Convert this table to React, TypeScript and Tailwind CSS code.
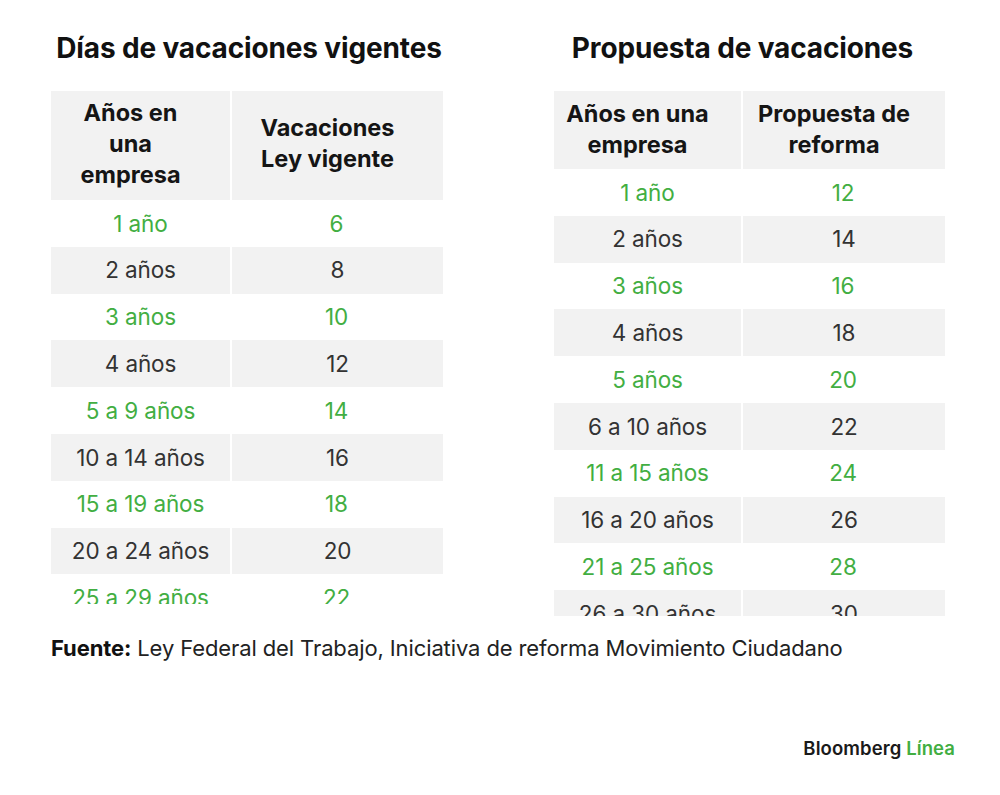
import React from "react"

type Row = { years: string; days: string }

const current: Row[] = [
  { years: "1 año", days: "6" },
  { years: "2 años", days: "8" },
  { years: "3 años", days: "10" },
  { years: "4 años", days: "12" },
  { years: "5 a 9 años", days: "14" },
  { years: "10 a 14 años", days: "16" },
  { years: "15 a 19 años", days: "18" },
  { years: "20 a 24 años", days: "20" },
  { years: "25 a 29 años", days: "22" },
]

const proposal: Row[] = [
  { years: "1 año", days: "12" },
  { years: "2 años", days: "14" },
  { years: "3 años", days: "16" },
  { years: "4 años", days: "18" },
  { years: "5 años", days: "20" },
  { years: "6 a 10 años", days: "22" },
  { years: "11 a 15 años", days: "24" },
  { years: "16 a 20 años", days: "26" },
  { years: "21 a 25 años", days: "28" },
  { years: "26 a 30 años", days: "30" },
]

const font = { fontFamily: "Inter, 'Liberation Sans', sans-serif" }

const DataRows = ({ rows, firstCol }: { rows: Row[]; firstCol: string }) => (
  <>
    {rows.map((r, i) => {
      const green = i % 2 === 0
      return (
        <div
          key={r.years}
          className={`flex h-[46.8px] shrink-0 text-[22.5px] tracking-[-0.005em] ${
            green ? "bg-white text-[#42ae42]" : "bg-[#f2f2f2] text-[#333333]"
          }`}
        >
          <div className={`${firstCol} flex items-center justify-center`}>{r.years}</div>
          <div className={`flex-1 flex items-center justify-center ${green ? "" : "border-l-2 border-white"}`}>
            {r.days}
          </div>
        </div>
      )
    })}
  </>
)

export default function App() {
  return (
    <div className="w-[1000px] h-[795px] bg-white text-[#111] relative" style={font}>
      <div className="flex pl-[51px] pt-[29px]">
        <div className="w-[392px] flex flex-col">
          <h1 className="text-[28px] font-bold tracking-[-0.005em] text-center h-[38px] leading-[38px] pl-[4px] whitespace-nowrap">
            Días de vacaciones vigentes
          </h1>
          <div className="mt-[24px] h-[513px] overflow-hidden flex flex-col">
            <div className="flex h-[109px] shrink-0 bg-[#f2f2f2] text-[23.5px] font-bold leading-[31px] text-[#151515]">
              <div className="w-[179px] flex items-center justify-center text-center pb-[4px] pr-[20px]">
                Años en
                <br />
                una
                <br />
                empresa
              </div>
              <div className="flex-1 border-l-2 border-white flex items-center justify-center text-center pb-[6px] pr-[20px]">
                Vacaciones
                <br />
                Ley vigente
              </div>
            </div>
            <DataRows rows={current} firstCol="w-[179px]" />
          </div>
        </div>

        <div className="w-[391px] ml-[111px] flex flex-col">
          <h1 className="text-[28px] font-bold tracking-[-0.005em] text-center h-[38px] leading-[38px] pr-[14px] whitespace-nowrap">
            Propuesta de vacaciones
          </h1>
          <div className="mt-[24px] h-[525px] overflow-hidden flex flex-col">
            <div className="flex h-[78px] shrink-0 bg-[#f2f2f2] text-[23.5px] font-bold leading-[31px] text-[#151515]">
              <div className="w-[187px] flex items-center justify-center text-center pb-[2px] pr-[20px] whitespace-nowrap">
                Años en una
                <br />
                empresa
              </div>
              <div className="flex-1 border-l-2 border-white flex items-center justify-center text-center pb-[2px] pr-[20px] whitespace-nowrap">
                Propuesta de
                <br />
                reforma
              </div>
            </div>
            <DataRows rows={proposal} firstCol="w-[187px]" />
          </div>
        </div>
      </div>

      <p className="pl-[51px] mt-[16px] text-[22px] tracking-[-0.005em] text-[#222] whitespace-nowrap">
        <span className="font-bold text-[#111]">Fuente:</span> Ley Federal del Trabajo, Iniciativa de reforma
        Movimiento Ciudadano
      </p>

      <div className="absolute right-[45px] top-[735px] text-[18.5px] font-semibold tracking-[0.005em]">
        <span className="text-[#1a1a1a]">Bloomberg</span> <span className="text-[#42ae42]">Línea</span>
      </div>
    </div>
  )
}
